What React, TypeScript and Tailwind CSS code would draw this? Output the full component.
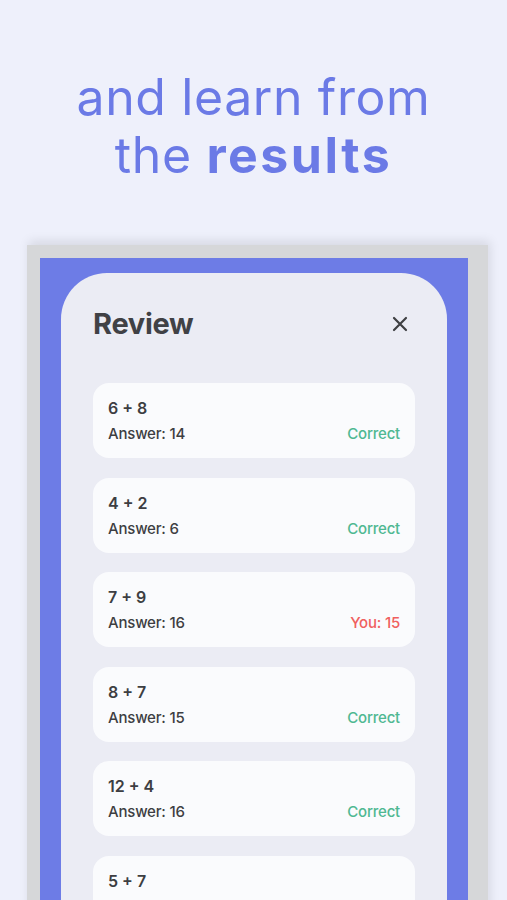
import React from "react";

const items = [
  { q: "6 + 8", a: "Answer: 14", r: "Correct", ok: true },
  { q: "4 + 2", a: "Answer: 6", r: "Correct", ok: true },
  { q: "7 + 9", a: "Answer: 16", r: "You: 15", ok: false },
  { q: "8 + 7", a: "Answer: 15", r: "Correct", ok: true },
  { q: "12 + 4", a: "Answer: 16", r: "Correct", ok: true },
  { q: "5 + 7", a: "", r: "", ok: true },
];

export default function App() {
  return (
    <div
      className="w-[507px] h-[900px] overflow-hidden bg-[#eef0fb] flex flex-col"
      style={{ fontFamily: "Inter, 'Noto Sans', sans-serif" }}
    >
      <div className="pt-[68px] text-center text-[#6b7ae6] text-[50px] leading-[58px] tracking-[0.6px]">
        <div>and learn from</div>
        <div>
          the <span className="font-bold tracking-[2.5px]">results</span>
        </div>
      </div>
      <div className="mt-[61px] ml-[27px] w-[461px] flex-1 bg-[#d6d7d9] pl-[13px] pr-[20px] pt-[13px] shadow-[2px_-4px_10px_rgba(0,0,0,0.10)]">
        <div className="h-full bg-[#6d7ce6] px-[21px] pt-[15px]">
          <div className="h-full bg-[#ebecf4] rounded-t-[46px] px-[32px]">
            <div className="flex items-center justify-between pt-[34px] h-[100px] pb-[32px]">
              <div className="text-[29px] font-bold text-[#404145] tracking-[-0.3px]">Review</div>
              <svg width="16" height="16" viewBox="0 0 16 16" className="mr-[7px]">
                <path d="M2 2L14 14M14 2L2 14" stroke="#3f4043" strokeWidth="2.2" strokeLinecap="round" />
              </svg>
            </div>
            <div className="flex flex-col gap-[19.5px] mt-[10px]">
              {items.map((it, i) => (
                <div
                  key={i}
                  className="h-[75px] bg-[#fafbfd] rounded-[16px] px-[15px] pt-[15px] flex flex-col"
                >
                  <div className="text-[16px] font-semibold text-[#3d3e42] leading-[20px]">{it.q}</div>
                  {it.a && (
                    <div className="flex justify-between mt-[6px] text-[15px] font-medium leading-[20px] tracking-[-0.2px]">
                      <span className="text-[#3d3e42]">{it.a}</span>
                      <span className={it.ok ? "text-[#4fb892]" : "text-[#f0605f]"}>{it.r}</span>
                    </div>
                  )}
                </div>
              ))}
            </div>
          </div>
        </div>
      </div>
    </div>
  );
}
